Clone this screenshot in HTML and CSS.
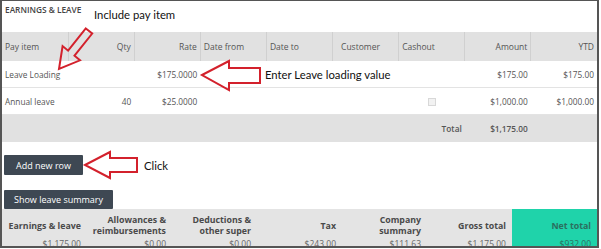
FILE: index.html
```html
<!DOCTYPE html>
<html>
<head>
	<meta charset="utf-8">
	<title>Earnings &amp; Leave</title>
	<link rel="stylesheet" href="styles.css">
</head>
<body>
  <div class="frame">
    <div class="section-title">EARNINGS &amp; LEAVE</div>
    <table class="pay-table">
      <thead>
        <tr>
          <th>Pay item</th>
          <th class="num">Qty</th>
          <th class="num">Rate</th>
          <th>Date from</th>
          <th>Date to</th>
          <th class="indent">Customer</th>
          <th>Cashout</th>
          <th class="num">Amount</th>
          <th class="num">YTD</th>
        </tr>
      </thead>
      <tbody>
        <tr>
          <td>Leave Loading</td>
          <td></td>
          <td class="num">$175.0000</td>
          <td></td>
          <td></td>
          <td></td>
          <td></td>
          <td class="num">$175.00</td>
          <td class="num">$175.00</td>
        </tr>
        <tr>
          <td>Annual leave</td>
          <td class="num">40</td>
          <td class="num">$25.0000</td>
          <td></td>
          <td></td>
          <td></td>
          <td class="center"><span class="check"></span></td>
          <td class="num">$1,000.00</td>
          <td class="num">$1,000.00</td>
        </tr>
        <tr class="total-row">
          <td colspan="6"></td>
          <td class="num">Total</td>
          <td class="num">$1,175.00</td>
          <td></td>
        </tr>
      </tbody>
    </table>

    <div class="actions">
      <button class="btn">Add new row</button>
      <button class="btn btn-short">Show leave summary</button>
    </div>

    <div class="summary">
      <div class="sum-col">
        <div class="sum-label">Earnings &amp; leave</div>
        <div class="sum-value">$1,175.00</div>
      </div>
      <div class="sum-col">
        <div class="sum-label">Allowances &amp;<br>reimbursements</div>
        <div class="sum-value">$0.00</div>
      </div>
      <div class="sum-col">
        <div class="sum-label">Deductions &amp;<br>other super</div>
        <div class="sum-value">$0.00</div>
      </div>
      <div class="sum-col">
        <div class="sum-label">Tax</div>
        <div class="sum-value">$243.00</div>
      </div>
      <div class="sum-col">
        <div class="sum-label">Company<br>summary</div>
        <div class="sum-value">$111.63</div>
      </div>
      <div class="sum-col">
        <div class="sum-label">Gross total</div>
        <div class="sum-value">$1,175.00</div>
      </div>
      <div class="sum-col net">
        <div class="sum-label">Net total</div>
        <div class="sum-value">$932.00</div>
      </div>
    </div>

    <!-- annotations drawn over the screenshot -->
    <div class="note note-include">Include pay item</div>
    <div class="note note-enter">Enter Leave loading value</div>
    <div class="note note-click">Click</div>
    <svg class="arrows" width="597" height="247" viewBox="0 0 597 247">
      <polygon points="83.8,28.5 90.2,33.5 72.5,55.7 78,60.3 57,69 60.6,46.1 66.1,50.7" />
      <polygon points="200,75 227,61 227,68 258,68 258,83 227,83 227,90" />
      <polygon points="83,165 108,152 108,158 135,158 135,172 108,172 108,178" />
    </svg>
  </div>
</body>
</html>
```

FILE: styles.css
```css
body{
  margin: 0;
  font-family: "Open Sans", "Liberation Sans", sans-serif;
  color: #555;
}
.frame{
  position: relative;
  width: 595px;
  height: 245px;
  border-style: solid;
  border-color: #555;
  border-width: 1px 2px 2px 2px;
  overflow: hidden;
  background: #fff;
}
.section-title{
  height: 31px;
  padding: 3px 0 0 3px;
  box-sizing: border-box;
  font-size: 8.3px;
  font-weight: 600;
  color: #444;
}
.pay-table{
  width: 595px;
  border-collapse: collapse;
  table-layout: fixed;
  font-size: 8.3px;
}
.pay-table th{
  background: #e1e1e1;
  height: 29px;
  font-size: 8.5px;
  font-weight: normal;
  text-align: left;
  padding: 0 3px;
  border-left: 1px solid #d0d0d0;
  color: #555;
}
.pay-table th:first-child{
  border-left: none;
}
.pay-table td{
  height: 26px;
  padding: 0 3px;
  border-bottom: 1px solid #e3e3e3;
  color: #555;
}
.pay-table .num{
  text-align: right;
}
.pay-table .indent{
  padding-left: 8px;
}
.pay-table .center{
  text-align: center;
}
.check{
  display: inline-block;
  width: 6px;
  height: 6px;
  border: 1px solid #d8d8d8;
  background: #f2f2f2;
  vertical-align: middle;
}
.total-row td{
  background: #e1e1e1;
  height: 27px;
  font-weight: 600;
  border-bottom: none;
}
.actions{
  display: flex;
  flex-direction: column;
  align-items: flex-start;
  gap: 15px;
  padding: 13px 0 0 2px;
}
.btn{
  background: #3e4853;
  color: #fff;
  border: none;
  font-family: "Open Sans", "Liberation Sans", sans-serif;
  font-size: 9px;
  height: 20px;
  padding: 0 12px;
  border-radius: 1px;
}
.btn-short{
  height: 19px;
  padding: 0 10px;
}
.summary{
  display: grid;
  grid-template-columns: repeat(7, 1fr);
  background: #e4e4e4;
  height: 39px;
}
.sum-col{
  display: flex;
  flex-direction: column;
  padding: 5px 6px 0 0;
  text-align: right;
}
.sum-label{
  height: 24px;
  display: flex;
  align-items: center;
  justify-content: flex-end;
  font-size: 8.8px;
  font-weight: 700;
  line-height: 11px;
  color: #4a4a4a;
}
.sum-value{
  font-size: 8.5px;
  line-height: 11px;
  color: #666;
}
.net{
  background: #1fd3aa;
}
.net .sum-label,
.net .sum-value{
  color: #2b6f5f;
}
.note{
  position: absolute;
  font-family: Lato, "Liberation Sans", sans-serif;
  font-size: 11.3px;
  color: #111;
}
.note-include{
  left: 92px;
  top: 7px;
}
.note-enter{
  left: 263px;
  top: 67px;
}
.note-click{
  left: 142px;
  top: 158px;
}
.arrows{
  position: absolute;
  left: 0;
  top: -1px;
  pointer-events: none;
}
.arrows polygon{
  fill: none;
  stroke: #d3212c;
  stroke-width: 2;
  stroke-linejoin: miter;
}
```
